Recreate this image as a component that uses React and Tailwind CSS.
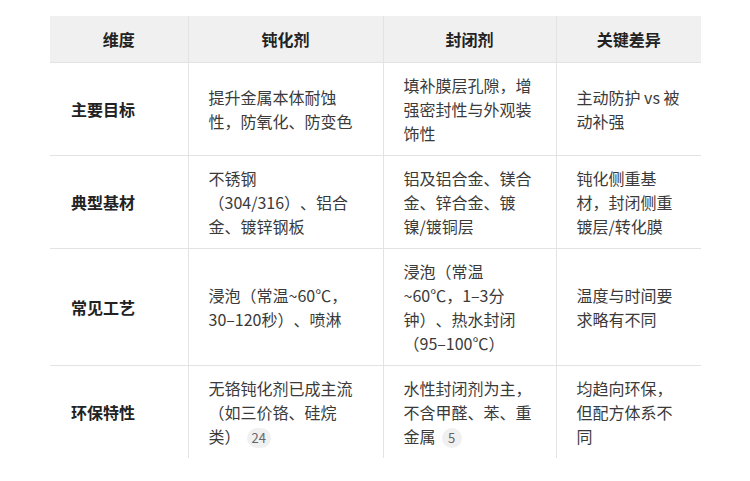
import React from "react";

const Badge = ({ n }) => (
  <span className="inline-block text-center ml-[6px] h-[20px] min-w-[20px] px-[5px] rounded-full bg-[#f0f0f0] text-[13px] leading-[20px] text-[#666]">
    {n}
  </span>
);

const rows = [
  {
    h: "主要目标",
    c: ["提升金属本体耐蚀性，防氧化、防变色", "填补膜层孔隙，增强密封性与外观装饰性", "主动防护 vs 被动补强"],
  },
  {
    h: "典型基材",
    c: ["不锈钢（304/316）、铝合金、镀锌钢板", "铝及铝合金、镁合金、锌合金、镀镍/镀铜层", "钝化侧重基材，封闭侧重镀层/转化膜"],
  },
  {
    h: "常见工艺",
    c: ["浸泡（常温~60℃，30–120秒）、喷淋", "浸泡（常温~60℃，1–3分钟）、热水封闭（95–100℃）", "温度与时间要求略有不同"],
  },
  {
    h: "环保特性",
    c: [
      <>无铬钝化剂已成主流（如三价铬、硅烷类）<Badge n="24" /></>,
      <>水性封闭剂为主，不含甲醛、苯、重金属<Badge n="5" /></>,
      "均趋向环保，但配方体系不同",
    ],
  },
];

export default function App() {
  return (
    <div
      className="w-[750px] h-[481px] bg-white overflow-hidden pt-[16px] pl-[50px] [text-spacing-trim:space-all]"
      style={{ fontFamily: '"Noto Sans CJK SC", "Noto Sans", sans-serif' }}
    >
      <table className="table-fixed border-collapse w-[651px] text-[16px] leading-[24px] text-[#3a3a3a]">
        <colgroup>
          <col className="w-[138px]" />
          <col className="w-[195px]" />
          <col className="w-[173px]" />
          <col className="w-[145px]" />
        </colgroup>
        <thead>
          <tr className="bg-[#f0f0f0] h-[46px]">
            {["维度", "钝化剂", "封闭剂", "关键差异"].map((t, i) => (
              <th
                key={t}
                className={`font-bold text-[#222] text-center px-5 py-[11px] border-b border-[#e3e3e3] ${i > 0 ? "border-l" : ""}`}
              >
                {t}
              </th>
            ))}
          </tr>
        </thead>
        <tbody>
          {rows.map((r, ri) => (
            <tr key={r.h} className={ri < rows.length - 1 ? "border-b border-[#e3e3e3]" : ""}>
              <td className="font-bold text-[#222] pl-[21px] pr-4 py-[10px] align-middle">{r.h}</td>
              {r.c.map((c, ci) => (
                <td key={ci} className="border-l border-[#e3e3e3] pl-[20px] pr-[20px] py-[10px] align-middle">
                  {c}
                </td>
              ))}
            </tr>
          ))}
        </tbody>
      </table>
    </div>
  );
}
